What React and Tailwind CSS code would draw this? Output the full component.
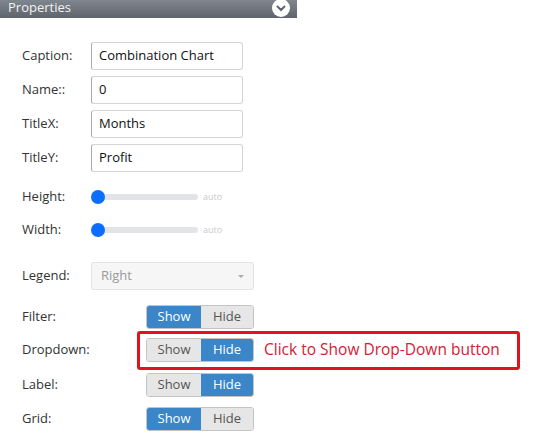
import React from 'react';

const font = { fontFamily: '"Open Sans", "Noto Sans", sans-serif' };

const TextRow = ({ label, value }) => (
  <div className="flex items-center h-[28px]">
    <span className="w-[69px] text-[13px] text-[#333]">{label}</span>
    <div className="w-[152px] h-[28px] border border-[#d4d4d4] border-l-[#aaa] rounded-[3px] bg-white flex items-center px-[7px] text-[13px] text-[#111]">
      {value}
    </div>
  </div>
);

const SliderRow = ({ label }) => (
  <div className="flex items-center h-[28px]">
    <span className="w-[69px] text-[13px] text-[#333]">{label}</span>
    <div className="relative w-[107px] h-[14px] flex items-center">
      <div className="ml-[7px] w-[100px] h-[6px] rounded-full bg-[#e2e4e8]" />
      <div className="absolute left-0 top-0 w-[14px] h-[14px] rounded-full bg-[#0d6efd]" />
    </div>
    <span className="ml-[5px] text-[9px] text-[#c9c9c9]">auto</span>
  </div>
);

const Toggle = ({ show }) => (
  <div className="flex h-[24px] w-[108px] rounded-[3px] overflow-hidden border border-[#c4c4c4] text-[13px]">
    <div className={show ? 'w-[54px] flex items-center justify-center bg-[#3a86c8] text-white' : 'w-[54px] flex items-center justify-center bg-[#e6e6e6] text-[#555]'}>Show</div>
    <div className={show ? 'flex-1 flex items-center justify-center bg-[#e6e6e6] text-[#555]' : 'flex-1 flex items-center justify-center bg-[#3a86c8] text-white'}>Hide</div>
  </div>
);

const ToggleRow = ({ label, show }) => (
  <div className="flex items-center h-[24px]">
    <span className="w-[124px] text-[13px] text-[#333]">{label}</span>
    <Toggle show={show} />
  </div>
);

export default function App() {
  return (
    <div className="w-[550px] h-[441px] bg-white overflow-hidden" style={font}>
      <div className="w-[297px] h-[18px] bg-gradient-to-b from-[#80868f] to-[#5f646c] flex items-center justify-between overflow-hidden">
        <span className="ml-[8px] -mt-[4px] text-[13px] leading-[18px] text-[#f2f2f2]">Properties</span>
        <div className="mr-[7px] -mt-[2px] w-[18px] h-[18px] rounded-full bg-white flex items-center justify-center">
          <svg width="10" height="7" viewBox="0 0 10 7">
            <path d="M1.5 1.5 L5 5 L8.5 1.5" fill="none" stroke="#5f646c" strokeWidth="2" strokeLinecap="round" />
          </svg>
        </div>
      </div>

      <div className="pl-[22px] pt-[24px] flex flex-col">
        <div className="flex flex-col gap-[6px]">
          <TextRow label="Caption:" value="Combination Chart" />
          <TextRow label="Name::" value="0" />
          <TextRow label="TitleX:" value="Months" />
          <TextRow label="TitleY:" value="Profit" />
        </div>

        <div className="mt-[11px] flex flex-col gap-[5px]">
          <SliderRow label="Height:" />
          <SliderRow label="Width:" />
        </div>

        <div className="mt-[18px] flex items-center h-[28px]">
          <span className="w-[69px] text-[13px] text-[#333]">Legend:</span>
          <div className="w-[163px] h-[28px] border border-[#e3e3e3] rounded-[3px] bg-[#f6f6f6] flex items-center justify-between px-[9px] text-[13px] text-[#9a9a9a]">
            <span>Right</span>
            <span className="w-0 h-0 border-l-[3px] border-r-[3px] border-t-[3px] border-l-transparent border-r-transparent border-t-[#aaa]" />
          </div>
        </div>

        <div className="mt-[15px]">
          <ToggleRow label="Filter:" show />
        </div>

        <div className="mt-[9px] flex items-center h-[24px]">
          <span className="w-[115px] text-[13px] text-[#333]">Dropdown:</span>
          <div className="-my-[7px] w-[383px] h-[39px] border-[3px] border-[#e3121f] rounded-[3px] flex items-center pl-[6px] pb-[1px]">
            <Toggle show={false} />
            <span className="ml-[10px] text-[15.5px] text-[#d42035]">Click to Show Drop-Down button</span>
          </div>
        </div>

        <div className="mt-[11px]">
          <ToggleRow label="Label:" show={false} />
        </div>

        <div className="mt-[10px]">
          <ToggleRow label="Grid:" show />
        </div>
      </div>
    </div>
  );
}
